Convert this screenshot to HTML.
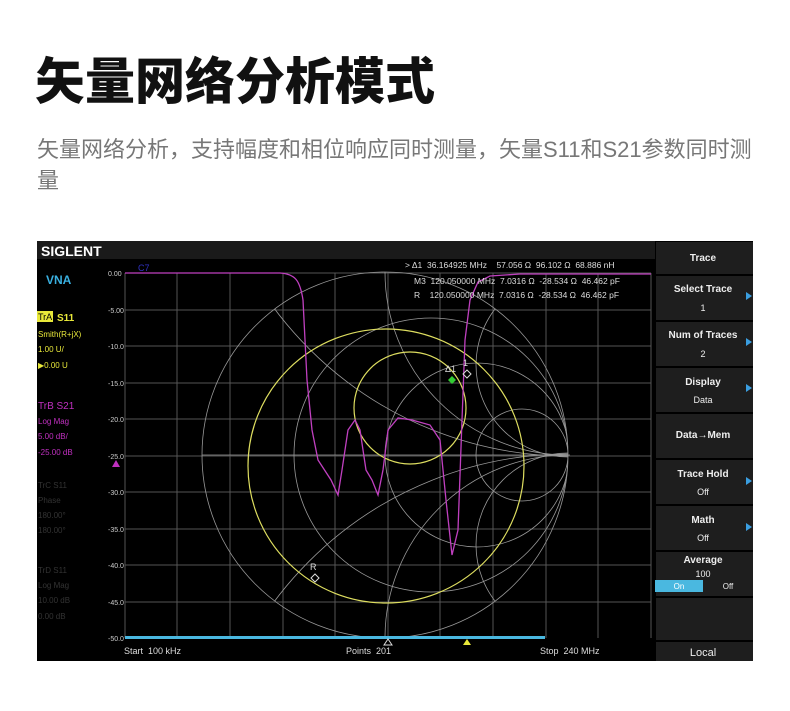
<!DOCTYPE html>
<html><head><meta charset="utf-8"><style>
html,body{margin:0;width:790px;height:711px;background:#fff;overflow:hidden;font-family:"Liberation Sans","Noto Sans CJK SC",sans-serif;}
h1{position:absolute;left:35px;top:48px;margin:0;font-size:50px;font-weight:900;color:#111;letter-spacing:0px;font-family:"Noto Sans CJK SC",sans-serif;line-height:1.2;}
p{position:absolute;left:37px;top:134px;width:740px;margin:0;font-size:22px;line-height:31px;color:#777;font-family:"Liberation Sans","Noto Sans CJK SC",sans-serif;white-space:nowrap;}
svg{position:absolute;left:37px;top:241px;}
svg text{white-space:pre;}
</style></head><body>
<h1>矢量网络分析模式</h1>
<p>矢量网络分析，支持幅度和相位响应同时测量，矢量S11和S21参数同时测<br>量</p>
<svg width="716" height="420" viewBox="37 241 716 420" font-family="Liberation Sans, sans-serif">
<defs><clipPath id="c"><circle cx="385" cy="455" r="183"/></clipPath></defs>
<rect x="37" y="241" width="716" height="420" fill="#000"/>
<rect x="37" y="241" width="618" height="18" fill="#1a1a1a"/>
<text x="41" y="256" fill="#fff" font-size="14" font-weight="bold">SIGLENT</text>
<text x="46" y="284" fill="#3ab0e0" font-size="12" font-weight="bold">VNA</text>
<rect x="37" y="311" width="16" height="11" fill="#e8e83a"/>
<text x="38" y="320" fill="#000" font-size="9">TrA</text>
<text x="57" y="321" fill="#e8e83a" font-size="10" font-weight="bold">S11</text>
<g fill="#e8e83a" font-size="8"><text x="38" y="337">Smith(R+jX)</text><text x="38" y="352">1.00 U/</text><text x="38" y="368">▶0.00 U</text></g>
<g fill="#c030c0" font-size="8"><text x="38" y="409" font-size="10">TrB S21</text><text x="38" y="424">Log Mag</text><text x="38" y="439">5.00 dB/</text><text x="38" y="455">-25.00 dB</text></g>
<g fill="#333" font-size="8"><text x="38" y="488">TrC S11</text><text x="38" y="503">Phase</text><text x="38" y="518">180.00°</text><text x="38" y="533">180.00°</text><text x="38" y="573">TrD S11</text><text x="38" y="588">Log Mag</text><text x="38" y="603">10.00 dB</text><text x="38" y="619">0.00 dB</text></g>
<path d="M112 467l4-7 4 7z" fill="#c030c0"/>
<g stroke="#555" stroke-width="1">
<path d="M125 273H651M125 310H651M125 346H651M125 383H651M125 419H651M125 456H651M125 492H651M125 529H651M125 565H651M125 602H651"/>
<path d="M125 273V638M177 273V638M230 273V638M283 273V638M335 273V638M388 273V638M440 273V638M493 273V638M546 273V638M598 273V638M651 273V638"/>
</g>
<g fill="#ccc" font-size="7"><text x="108" y="276">0.00</text><text x="108" y="313">-5.00</text><text x="108" y="349">-10.0</text><text x="108" y="386">-15.0</text><text x="108" y="422">-20.0</text><text x="108" y="459">-25.0</text><text x="108" y="495">-30.0</text><text x="108" y="532">-35.0</text><text x="108" y="568">-40.0</text><text x="108" y="605">-45.0</text><text x="108" y="641">-50.0</text></g>
<g fill="none" stroke="#999" stroke-width="0.8">
<circle cx="385" cy="455" r="183"/>
<path d="M202 455H570"/>
<g clip-path="url(#c)">
<circle cx="431" cy="455" r="137"/><circle cx="477" cy="455" r="92"/><circle cx="522" cy="455" r="46"/>
<circle cx="568" cy="272" r="183"/><circle cx="568" cy="638" r="183"/>
<circle cx="568" cy="90" r="366"/><circle cx="568" cy="820" r="366"/>
<circle cx="568" cy="365" r="92"/><circle cx="568" cy="545" r="92"/>
</g>
</g>
<g fill="none" stroke="#dede60" stroke-width="1.2">
<ellipse cx="386" cy="466" rx="138" ry="137"/>
<circle cx="410" cy="408" r="56"/>
</g>
<path d="M125 273H280C295 274 300 280 303 300L307 380L312 430L318 460L331 480L338 495L342 470L348 430L355 420L360 430L366 470L372 480L378 495L383 470L388 430L398 418L412 420L430 425L440 440L446 500L452 555L458 530L462 420L465 340L470 300L478 282L490 276L520 274H651" fill="none" stroke="#c040c0" stroke-width="1.3"/>
<path d="M452 376l4 4-4 4-4-4z" fill="#3c3"/>
<path d="M467 370l4 4-4 4-4-4z" fill="none" stroke="#ddd"/>
<path d="M315 574l4 4-4 4-4-4z" fill="none" stroke="#ddd"/>
<g fill="#ddd" font-size="9"><text x="445" y="372">Δ1</text><text x="463" y="366">1</text><text x="310" y="570">R</text></g>
<text x="138" y="271" fill="#3030c0" font-size="9">C7</text>
<g fill="#ddd" font-size="8.5"><text x="405" y="268">&gt; Δ1  36.164925 MHz    57.056 Ω  96.102 Ω  68.886 nH</text><text x="414" y="284">M3  120.050000 MHz  7.0316 Ω  -28.534 Ω  46.462 pF</text><text x="414" y="298">R    120.050000 MHz  7.0316 Ω  -28.534 Ω  46.462 pF</text></g>
<rect x="125" y="636" width="420" height="3" fill="#4ab8e0"/>
<path d="M463 645l4-6 4 6z" fill="#e8e83a"/><path d="M384 645l4-6 4 6z" fill="none" stroke="#ddd"/>
<g fill="#ddd" font-size="9"><text x="124" y="654">Start  100 kHz</text><text x="346" y="654">Points  201</text><text x="540" y="654">Stop  240 MHz</text></g>
<g fill="#1e1e1e"><rect x="656" y="242" width="97" height="32"/><rect x="656" y="276" width="97" height="44"/><rect x="656" y="322" width="97" height="44"/><rect x="656" y="368" width="97" height="44"/><rect x="656" y="414" width="97" height="44"/><rect x="656" y="460" width="97" height="44"/><rect x="656" y="506" width="97" height="44"/><rect x="656" y="552" width="97" height="44"/><rect x="656" y="598" width="97" height="42"/><rect x="656" y="642" width="97" height="19"/></g>
<g fill="#eee" font-size="10" font-weight="bold" text-anchor="middle"><text x="703" y="261">Trace</text><text x="703" y="292">Select Trace</text><text x="703" y="338">Num of Traces</text><text x="703" y="385">Display</text><text x="703" y="438">Data→Mem</text><text x="703" y="477">Trace Hold</text><text x="703" y="523">Math</text><text x="703" y="563">Average</text></g>
<g fill="#eee" font-size="9" text-anchor="middle"><text x="703" y="311">1</text><text x="703" y="357">2</text><text x="703" y="403">Data</text><text x="703" y="495">Off</text><text x="703" y="541">Off</text><text x="703" y="577">100</text><text x="703" y="656" font-size="11">Local</text></g>
<rect x="655" y="580" width="48" height="12" fill="#4ab8e0"/>
<g font-size="8" text-anchor="middle"><text x="679" y="589" fill="#fff">On</text><text x="728" y="589" fill="#eee">Off</text></g>
<g fill="#3a9ee0"><path d="M746 292l6 4-6 4z"/><path d="M746 338l6 4-6 4z"/><path d="M746 384l6 4-6 4z"/><path d="M746 477l6 4-6 4z"/><path d="M746 523l6 4-6 4z"/></g>
</svg>
</body></html>
